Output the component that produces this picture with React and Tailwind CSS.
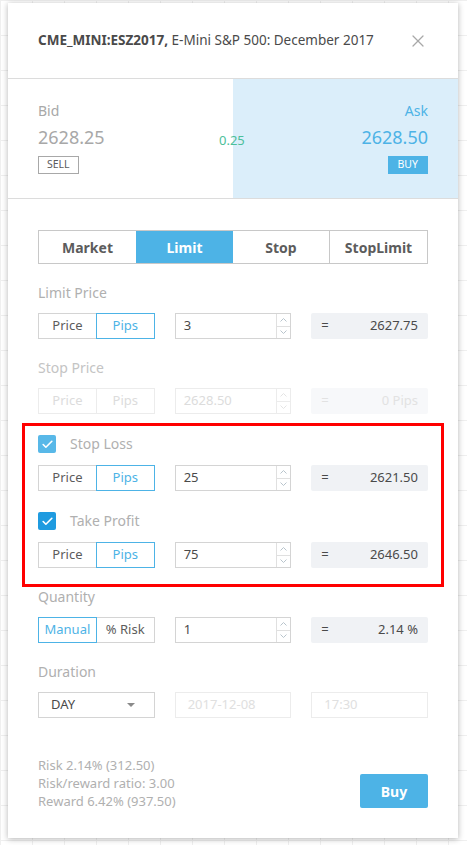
import { Check, X } from 'lucide-react';

const font = "font-['Noto_Sans',sans-serif]";

function Toggle({ left, right, active, disabled }) {
  const base = 'flex-1 flex items-center justify-center text-[13px] border';
  if (disabled) {
    return (
      <div className="flex h-[26px]">
        <div className={`${base} border-[#ececec] text-[#dcdcdc]`}>{left}</div>
        <div className={`${base} border-l-0 border-[#ececec] text-[#dcdcdc]`}>{right}</div>
      </div>
    );
  }
  const on = 'border-[#4db3e6] text-[#4db3e6]';
  const off = 'border-[#d4d4d4] text-[#5c5c5c]';
  return (
    <div className="flex h-[26px]">
      <div className={`${base} ${active === 0 ? on : `${off} border-r-0`}`}>{left}</div>
      <div className={`${base} ${active === 1 ? on : `${off} border-l-0`}`}>{right}</div>
    </div>
  );
}

function Spin({ value, disabled }) {
  return (
    <div className={`flex h-[26px] border ${disabled ? 'border-[#ececec]' : 'border-[#d4d4d4]'}`}>
      <div className={`flex-1 flex items-center pl-[8px] text-[13px] ${disabled ? 'text-[#dcdcdc]' : 'text-[#4a4a4a]'}`}>
        {value}
      </div>
      <div className={`w-[14px] flex flex-col border-l ${disabled ? 'border-[#ececec]' : 'border-[#e0e0e0]'}`}>
        <div className={`flex-1 flex items-center justify-center border-b ${disabled ? 'border-[#ececec]' : 'border-[#e0e0e0]'}`}>
          <svg width="7" height="4" viewBox="0 0 7 4"><path d="M0.5 3.5L3.5 0.5L6.5 3.5" fill="none" stroke={disabled ? '#e4e4e4' : '#b8c4cc'} strokeWidth="1" /></svg>
        </div>
        <div className="flex-1 flex items-center justify-center">
          <svg width="7" height="4" viewBox="0 0 7 4"><path d="M0.5 0.5L3.5 3.5L6.5 0.5" fill="none" stroke={disabled ? '#e4e4e4' : '#b8c4cc'} strokeWidth="1" /></svg>
        </div>
      </div>
    </div>
  );
}

function Result({ value, disabled }) {
  return (
    <div className={`h-[26px] flex items-center justify-between px-[10px] text-[13px] rounded-[2px] ${disabled ? 'bg-[#f7f8fa] text-[#e2e2e2]' : 'bg-[#f0f2f5] text-[#4a4a4a]'}`}>
      <span>=</span>
      <span>{value}</span>
    </div>
  );
}

function Row({ children }) {
  return <div className="grid grid-cols-3 gap-x-[20px]">{children}</div>;
}

function Label({ children, className = '' }) {
  return <div className={`text-[14px] leading-[18px] text-[#b0b0b0] ${className}`}>{children}</div>;
}

function CheckBox({ dark }) {
  return (
    <div className={`w-[18px] h-[18px] rounded-[2px] flex items-center justify-center ${dark ? 'bg-[#1f9be0]' : 'bg-[#58b8e8]'}`}>
      <Check size={13} strokeWidth={3} className="text-white" />
    </div>
  );
}

export default function App() {
  return (
    <div
      className={`${font} w-[467px] h-[845px] overflow-hidden pl-[8px] pt-[3px] bg-white bg-[linear-gradient(#efefef_1px,transparent_1px),linear-gradient(90deg,#efefef_1px,transparent_1px)] bg-[size:32px_35px]`}
    >
      <div className="w-[450px] h-[835px] bg-white shadow-[0_1px_6px_rgba(0,0,0,0.3)] flex flex-col">
        {/* Header */}
        <div className="h-[76px] flex items-center justify-between px-[30px] border-b border-[#dcdcdc]">
          <div className="text-[13.5px] text-[#4a4a4a]">
            <span className="font-bold">CME_MINI:ESZ2017,</span> E-Mini S&amp;P 500: December 2017
          </div>
          <X size={20} strokeWidth={1.5} className="text-[#a8a8a8]" />
        </div>

        {/* Bid / Ask */}
        <div className="relative h-[120px] grid grid-cols-2 border-b border-[#dcdcdc]">
          <div className="pl-[30px] pt-[23px] flex flex-col items-start">
            <div className="text-[14px] leading-[18px] text-[#a8a8a8]">Bid</div>
            <div className="mt-[5px] text-[18px] leading-[24px] text-[#a8a8a8]">2628.25</div>
            <div className="mt-[7px] h-[18px] px-[8px] border border-[#a8a8a8] text-[10.5px] text-[#5c5c5c] flex items-center">SELL</div>
          </div>
          <div className="bg-[#dbeefa] pr-[30px] pt-[23px] flex flex-col items-end">
            <div className="text-[14px] leading-[18px] text-[#4db3e6]">Ask</div>
            <div className="mt-[5px] text-[18px] leading-[24px] text-[#4db3e6]">2628.50</div>
            <div className="mt-[7px] h-[18px] px-[10px] bg-[#4db3e6] text-[10.5px] text-white flex items-center">BUY</div>
          </div>
          <div className="absolute left-[211px] top-[52px] text-[13px] text-[#4cbf9a]">0.25</div>
        </div>

        {/* Body */}
        <div className="px-[30px] pt-[31px] flex flex-col">
          <div className="grid grid-cols-4 h-[34px] border border-[#c8c8c8] text-[14px] font-bold">
            <div className="flex items-center justify-center text-[#5c5c5c]">Market</div>
            <div className="flex items-center justify-center bg-[#4db3e6] text-white">Limit</div>
            <div className="flex items-center justify-center text-[#5c5c5c] border-r border-[#c8c8c8]">Stop</div>
            <div className="flex items-center justify-center text-[#5c5c5c]">StopLimit</div>
          </div>

          <Label className="mt-[20px]">Limit Price</Label>
          <div className="mt-[11px]">
            <Row>
              <Toggle left="Price" right="Pips" active={1} />
              <Spin value="3" />
              <Result value="2627.75" />
            </Row>
          </div>

          <Label className="mt-[20px] text-[#c4c4c4]">Stop Price</Label>
          <div className="mt-[11px]">
            <Row>
              <Toggle left="Price" right="Pips" disabled />
              <Spin value="2628.50" disabled />
              <Result value="0 Pips" disabled />
            </Row>
          </div>

          <div className="mt-[9px] -mx-[16px] border-[3px] border-[#ff0000] px-[13px] pt-[9px] pb-[16px]">
            <div className="flex items-center gap-[14px]">
              <CheckBox />
              <Label>Stop Loss</Label>
            </div>
            <div className="mt-[12px]">
              <Row>
                <Toggle left="Price" right="Pips" active={1} />
                <Spin value="25" />
                <Result value="2621.50" />
              </Row>
            </div>
            <div className="mt-[21px] flex items-center gap-[14px]">
              <CheckBox dark />
              <Label>Take Profit</Label>
            </div>
            <div className="mt-[12px]">
              <Row>
                <Toggle left="Price" right="Pips" active={1} />
                <Spin value="75" />
                <Result value="2646.50" />
              </Row>
            </div>
          </div>

          <Label className="mt-[1px]">Quantity</Label>
          <div className="mt-[11px]">
            <Row>
              <Toggle left="Manual" right="% Risk" active={0} />
              <Spin value="1" />
              <Result value="2.14 %" />
            </Row>
          </div>

          <Label className="mt-[20px]">Duration</Label>
          <div className="mt-[11px]">
            <Row>
              <div className="h-[26px] border border-[#d4d4d4] flex items-center justify-between pl-[12px] pr-[19px] text-[13px] text-[#4a4a4a]">
                <span>DAY</span>
                <svg width="8" height="4" viewBox="0 0 8 4"><path d="M0 0H8L4 4Z" fill="#8a8a8a" /></svg>
              </div>
              <div className="h-[26px] border border-[#ececec] flex items-center pl-[12px] text-[13px] text-[#e0e0e0]">2017-12-08</div>
              <div className="h-[26px] border border-[#ececec] flex items-center pl-[12px] text-[13px] text-[#e0e0e0]">17:30</div>
            </Row>
          </div>

          <div className="mt-[38px] flex items-start justify-between">
            <div className="text-[13px] leading-[18px] text-[#b0b0b0]">
              <div>Risk 2.14% (312.50)</div>
              <div>Risk/reward ratio: 3.00</div>
              <div>Reward 6.42% (937.50)</div>
            </div>
            <div className="mt-[18px] w-[68px] h-[34px] rounded-[2px] bg-[#4db3e6] text-white font-bold text-[14px] flex items-center justify-center">
              Buy
            </div>
          </div>
        </div>
      </div>
    </div>
  );
}
